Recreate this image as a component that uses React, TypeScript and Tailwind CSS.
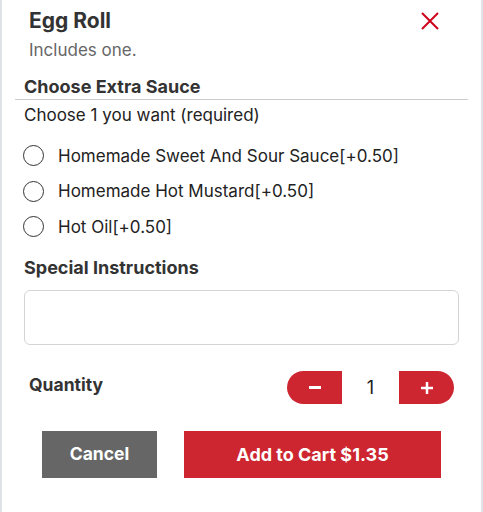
import React, { useState } from 'react';

const options = [
  'Homemade Sweet And Sour Sauce[+0.50]',
  'Homemade Hot Mustard[+0.50]',
  'Hot Oil[+0.50]',
];

function Radio({ label }: { label: string }) {
  return (
    <label className="flex h-[35.5px] items-center gap-[14px] pl-[21px]">
      <span className="size-[21px] rounded-full border border-[#333]" />
      <span className="text-[17px] leading-6 text-[#222]">{label}</span>
    </label>
  );
}

export default function App() {
  const [qty] = useState(1);

  return (
    <main
      className="h-[512px] w-full border-x-2 border-[#dfe2e6] bg-white"
      style={{ fontFamily: 'Inter, "Liberation Sans", sans-serif' }}
    >
      <header className="flex items-start justify-between pl-[27px] pr-[41px] pt-[9px]">
        <h1 className="text-[21px] font-bold leading-6 text-[#333]">Egg Roll</h1>
        <button className="mt-[2px] text-[#d0021b]" aria-label="Close">
          <svg width="20" height="20" viewBox="0 0 20 20" fill="none" stroke="currentColor" strokeWidth="2">
            <path d="M2 2 L18 18 M18 2 L2 18" />
          </svg>
        </button>
      </header>
      <p className="mt-[5px] pl-[27px] text-[17px] leading-6 text-[#666]">Includes one.</p>

      <div className="mx-[13px] mt-[13px] border-b border-[#cccccc] pl-[9px]">
        <h2 className="text-[18px] font-bold leading-6 text-[#333]">Choose Extra Sauce</h2>
      </div>
      <p className="mt-[3px] pl-[22px] text-[17px] leading-6 text-[#222]">Choose 1 you want (required)</p>

      <div className="mt-[11px]">
        {options.map((o) => (
          <Radio key={o} label={o} />
        ))}
      </div>

      <h2 className="mt-[11.5px] pl-[22px] text-[18px] font-bold leading-6 text-[#333]">Special Instructions</h2>
      <textarea className="mx-[22px] mt-[10px] block h-[55px] w-[435px] resize-none rounded-[6px] border border-[#d4d4d4]" />

      <div className="mt-[26px] flex h-[33px] items-center justify-between pl-[27px] pr-[27px]">
        <span className="pb-[6px] text-[17.5px] font-bold leading-6 text-[#333]">Quantity</span>
        <div className="flex items-center">
          <button className="flex h-[33px] w-[55px] items-center justify-center rounded-l-full bg-[#cd2630]" aria-label="Decrease">
            <span className="block h-[2.5px] w-[12px] bg-white" />
          </button>
          <span className="w-[57px] text-center text-[18px] leading-6 text-[#222]">{qty}</span>
          <button className="flex h-[33px] w-[55px] items-center justify-center rounded-r-full bg-[#cd2630]" aria-label="Increase">
            <svg width="14" height="14" viewBox="0 0 14 14" stroke="white" strokeWidth="2.5">
              <path d="M7 1 V13 M1 7 H13" />
            </svg>
          </button>
        </div>
      </div>

      <div className="mt-[27px] flex justify-center gap-[27px]">
        <button className="h-[47px] w-[115px] bg-[#666666] text-[17.5px] font-bold text-white">Cancel</button>
        <button className="h-[47px] w-[257px] bg-[#cd2630] text-[18px] font-bold text-white">Add to Cart $1.35</button>
      </div>
    </main>
  );
}
